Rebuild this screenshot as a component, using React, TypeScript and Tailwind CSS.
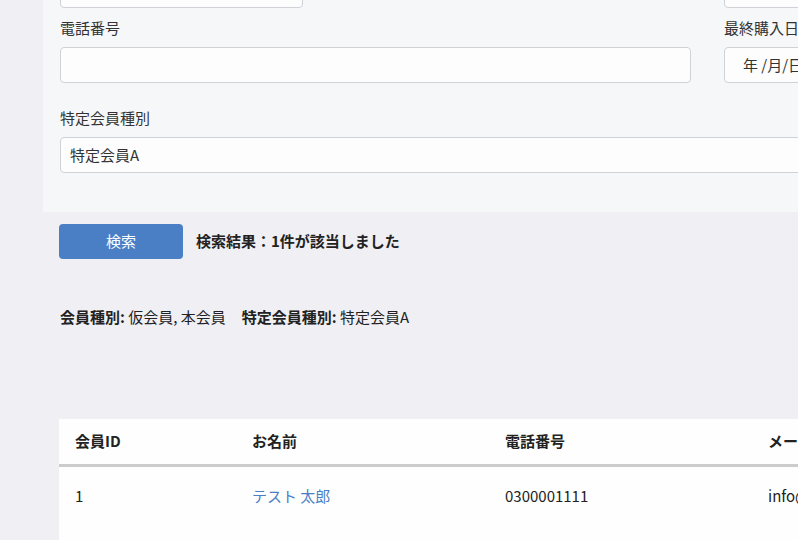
const font = { fontFamily: '"Noto Sans CJK JP", "Noto Sans", sans-serif' }

type Member = {
  id: number
  name: string
  tel: string
  mail: string
}

const members: Member[] = [
  { id: 1, name: 'テスト 太郎', tel: '0300001111', mail: 'info@example.com' },
]

function Field({
  label,
  value,
  className,
  inputClass = 'px-[9px]',
}: {
  label: string
  value?: string
  className: string
  inputClass?: string
}) {
  return (
    <div className={className}>
      <div className="h-[22px] text-[15px] leading-[22px] text-[#333]">{label}</div>
      <div
        className={`mt-2 flex h-[36px] items-center rounded-[4px] border border-[#cfd3d8] bg-[#fcfdfc] text-[15px] text-[#333] ${inputClass}`}
      >
        {value}
      </div>
    </div>
  )
}

export default function App() {
  return (
    <div className="h-[540px] w-[798px] overflow-hidden bg-[#efeff4]" style={font}>
      <div className="w-[1200px]">
        {/* Search panel — scrolled, top row is cut off */}
        <div className="ml-[43px] -mt-[27px] bg-[#f6f7f9] pl-[17px] pb-[39px]">
          <div className="flex gap-[33px]">
            <div className="w-[631px]">
              <div className="h-[35px] w-[243px] rounded-[4px] border border-[#cfd3d8] bg-[#fcfdfc]" />
            </div>
            <div className="h-[35px] w-[250px] rounded-[4px] border border-[#cfd3d8] bg-[#fcfdfc]" />
          </div>

          <div className="mt-[9px] flex gap-[33px]">
            <Field label="電話番号" className="w-[631px]" />
            <Field label="最終購入日" value="年 /月/日" className="w-[250px]" inputClass="pl-[18px]" />
          </div>

          <div className="mt-[24px]">
            <Field label="特定会員種別" value="特定会員A" className="w-[1000px]" />
          </div>
        </div>

        <div className="pl-[59px]">
          {/* Search button + result count */}
          <div className="mt-3 flex items-center gap-[13px]">
            <button className="h-[35px] w-[124px] rounded-[4px] bg-[#4a7fc6] text-[15px] text-white">
              検索
            </button>
            <span className="text-[15px] font-bold text-[#222]">検索結果：1件が該当しました</span>
          </div>

          {/* Active conditions */}
          <p className="mt-[47px] pl-px text-[15px] leading-[22px] text-[#222]">
            <span className="font-bold">会員種別:</span> 仮会員, 本会員
            <span className="ml-[16px] font-bold">特定会員種別:</span> 特定会員A
          </p>

          {/* Results table */}
          <table className="mt-[91px] w-[1000px] table-fixed border-collapse bg-[#fdfefd] text-left text-[15px] text-[#222]">
            <colgroup>
              <col className="w-[177px]" />
              <col className="w-[253px]" />
              <col className="w-[263px]" />
              <col />
            </colgroup>
            <thead>
              <tr className="border-b-[3px] border-[#cccccc]">
                <th className="h-[46px] pl-4 font-bold">会員ID</th>
                <th className="pl-4 font-bold">お名前</th>
                <th className="pl-4 font-bold">電話番号</th>
                <th className="pl-4 font-bold">メールアドレス</th>
              </tr>
            </thead>
            <tbody>
              {members.map((m) => (
                <tr key={m.id}>
                  <td className="h-[90px] pl-4 pt-[18px] align-top">{m.id}</td>
                  <td className="pl-4 pt-[18px] align-top">
                    <a href="#" className="text-[#4a7fc6]">{m.name}</a>
                  </td>
                  <td className="pl-4 pt-[18px] align-top">{m.tel}</td>
                  <td className="pl-4 pt-[18px] align-top">{m.mail}</td>
                </tr>
              ))}
            </tbody>
          </table>
        </div>
      </div>
    </div>
  )
}
